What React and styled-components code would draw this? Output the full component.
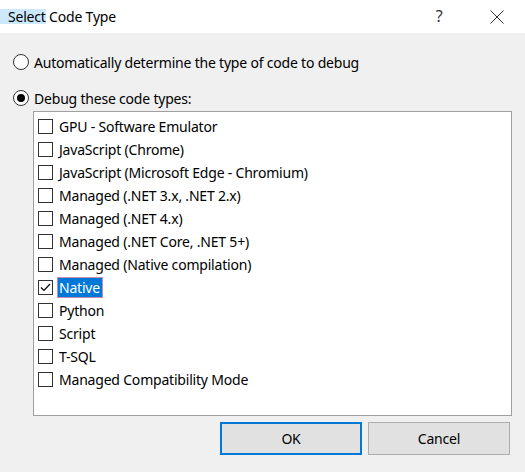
import React from 'react'
import styled, { createGlobalStyle } from 'styled-components'

const GlobalStyle = createGlobalStyle`
  html, body {
    margin: 0;
    padding: 0;
    background: #f0f0f0;
  }
  body {
    font-family: "Noto Sans", "Liberation Sans", sans-serif;
    letter-spacing: -0.2px;
    color: #000;
  }
`

const codeTypes = [
  'GPU - Software Emulator',
  'JavaScript (Chrome)',
  'JavaScript (Microsoft Edge - Chromium)',
  'Managed (.NET 3.x, .NET 2.x)',
  'Managed (.NET 4.x)',
  'Managed (.NET Core, .NET 5+)',
  'Managed (Native compilation)',
  'Native',
  'Python',
  'Script',
  'T-SQL',
  'Managed Compatibility Mode',
]

const CheckMark = () => (
  <svg width="13" height="13" viewBox="0 0 13 13">
    <path d="M2 6.5 L5 9.5 L11 3" fill="none" stroke="#000" strokeWidth="1.2" />
  </svg>
)

const CloseIcon = () => (
  <svg width="14" height="14" viewBox="0 0 14 14">
    <path d="M0.5 0.5 L13.5 13.5 M13.5 0.5 L0.5 13.5" stroke="#333" strokeWidth="1" />
  </svg>
)

const App = () => {
  return (
    <>
      <GlobalStyle />
      <Dialog>
        <TitleBar>
          <Title>
            <Selected>Select</Selected> Code Type
          </Title>
          <TitleButtons>
            <HelpButton>?</HelpButton>
            <CloseButton>
              <CloseIcon />
            </CloseButton>
          </TitleButtons>
        </TitleBar>

        <Body>
          <RadioRow>
            <Radio />
            <span>Automatically determine the type of code to debug</span>
          </RadioRow>
          <RadioRow>
            <Radio checked />
            <span>Debug these code types:</span>
          </RadioRow>

          <ListBox>
            {codeTypes.map((type) => (
              <ListItem key={type}>
                <CheckBox>{type === 'Native' && <CheckMark />}</CheckBox>
                <ItemLabel selected={type === 'Native'}>{type}</ItemLabel>
              </ListItem>
            ))}
          </ListBox>

          <ButtonRow>
            <Button primary>OK</Button>
            <Button>Cancel</Button>
          </ButtonRow>
        </Body>
      </Dialog>
    </>
  )
}

const Dialog = styled.div`
  width: 525px;
  height: 472px;
  background: #f0f0f0;
  display: flex;
  flex-direction: column;
  overflow: hidden;
`

const TitleBar = styled.div`
  height: 33px;
  background: #fff;
  display: flex;
  align-items: center;
  justify-content: space-between;
`

const Title = styled.div`
  font-size: 14px;
  line-height: 15px;
  white-space: pre;
`

const Selected = styled.span`
  background: #cce8ff;
  padding-left: 8px;
  display: inline-block;
  line-height: 15px;
`

const TitleButtons = styled.div`
  display: flex;
  align-items: center;
`

const HelpButton = styled.div`
  width: 60px;
  text-align: center;
  font-size: 16px;
  color: #333;
  margin-top: -1px;
`

const CloseButton = styled.div`
  width: 56px;
  display: flex;
  justify-content: center;
`

const Body = styled.div`
  flex: 1;
  display: flex;
  flex-direction: column;
  padding: 18px 13px 0 13px;
`

const RadioRow = styled.div`
  display: flex;
  align-items: center;
  gap: 5px;
  height: 22px;
  font-size: 14px;
  margin-bottom: 14px;
`

const Radio = styled.span`
  box-sizing: border-box;
  width: 16px;
  height: 16px;
  border-radius: 50%;
  border: 1px solid #333;
  background: #fff;
  position: relative;
  flex-shrink: 0;

  &::after {
    content: '';
    display: ${(p) => (p.checked ? 'block' : 'none')};
    position: absolute;
    left: 3px;
    top: 3px;
    width: 8px;
    height: 8px;
    border-radius: 50%;
    background: #000;
  }
`

const ListBox = styled.div`
  box-sizing: border-box;
  margin-left: 20px;
  margin-top: -12px;
  width: 479px;
  height: 305px;
  background: #fff;
  border: 1px solid #a0a0a0;
  padding: 3px 4px;
  display: flex;
  flex-direction: column;
`

const ListItem = styled.div`
  height: 23px;
  display: flex;
  align-items: center;
  gap: 4px;
  font-size: 14px;
`

const CheckBox = styled.span`
  box-sizing: border-box;
  width: 15px;
  height: 15px;
  border: 1px solid #333;
  background: #fff;
  display: flex;
  align-items: center;
  justify-content: center;
  flex-shrink: 0;
`

const ItemLabel = styled.span`
  padding: 0 2px 0 1px;
  line-height: 19px;
  border: 1px solid ${(p) => (p.selected ? '#c58bb6' : 'transparent')};
  background: ${(p) => (p.selected ? '#0078d7' : 'transparent')};
  color: ${(p) => (p.selected ? '#fff' : '#000')};
`

const ButtonRow = styled.div`
  display: flex;
  justify-content: flex-end;
  gap: 6px;
  margin-top: 6px;
  padding-right: 2px;
`

const Button = styled.button`
  box-sizing: border-box;
  width: 142px;
  height: 33px;
  background: #e1e1e1;
  border: ${(p) => (p.primary ? '2px solid #0078d7' : '1px solid #adadad')};
  font-family: inherit;
  letter-spacing: inherit;
  font-size: 14px;
  color: #000;
  padding: 0;
`

export default App
